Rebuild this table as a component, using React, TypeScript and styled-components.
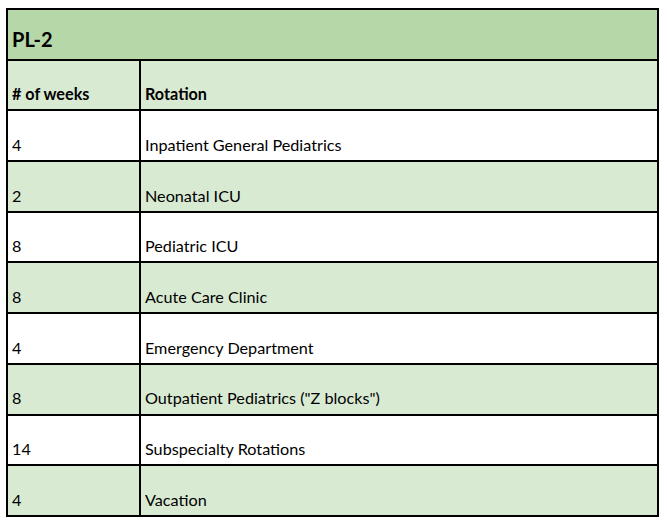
import React from "react";
import styled, { createGlobalStyle } from "styled-components";

const GlobalStyle = createGlobalStyle`
    html, body {
        margin: 0;
        padding: 0;
        background: #ffffff;
    }
    * {
        box-sizing: border-box;
    }
`;

const Page = styled.div`
    padding: 8px 0 0 6px;
    font-family: Lato, "Open Sans", sans-serif;
    color: #000;
`;

const Sheet = styled.div`
    width: 653px;
    display: grid;
    grid-template-columns: 133px 1fr;
    grid-auto-rows: 50.7px;
    border-top: 2px solid #000;
    border-left: 2px solid #000;
`;

const Cell = styled.div<{ $bg: string; $bold?: boolean; $span?: boolean; $big?: boolean }>`
    grid-column: ${(p) => (p.$span ? "1 / -1" : "auto")};
    background: ${(p) => p.$bg};
    border-right: 2px solid #000;
    border-bottom: 2px solid #000;
    display: flex;
    align-items: flex-end;
    padding: 0 4px ${(p) => (p.$big ? "10px" : "7px")} 4px;
    font-size: ${(p) => (p.$big ? "20px" : "16.2px")};
    font-weight: ${(p) => (p.$bold ? 700 : 400)};
    line-height: 1;
    white-space: nowrap;
`;

const TITLE = "#b6d7a8";
const LIGHT = "#d9ead3";
const WHITE = "#ffffff";

const rotations: [string, string][] = [
    ["4", "Inpatient General Pediatrics"],
    ["2", "Neonatal ICU"],
    ["8", "Pediatric ICU"],
    ["8", "Acute Care Clinic"],
    ["4", "Emergency Department"],
    ["8", 'Outpatient Pediatrics ("Z blocks")'],
    ["14", "Subspecialty Rotations"],
    ["4", "Vacation"],
];

const App: React.FC = () => {
    return (
        <>
            <GlobalStyle />
            <Page>
                <Sheet>
                    <Cell $bg={TITLE} $bold $span $big>
                        PL-2
                    </Cell>
                    <Cell $bg={LIGHT} $bold>
                        # of weeks
                    </Cell>
                    <Cell $bg={LIGHT} $bold>
                        Rotation
                    </Cell>
                    {rotations.map(([weeks, name], i) => {
                        const bg = i % 2 === 0 ? WHITE : LIGHT;
                        return (
                            <React.Fragment key={name}>
                                <Cell $bg={bg}>{weeks}</Cell>
                                <Cell $bg={bg}>{name}</Cell>
                            </React.Fragment>
                        );
                    })}
                </Sheet>
            </Page>
        </>
    );
};

export default App;
